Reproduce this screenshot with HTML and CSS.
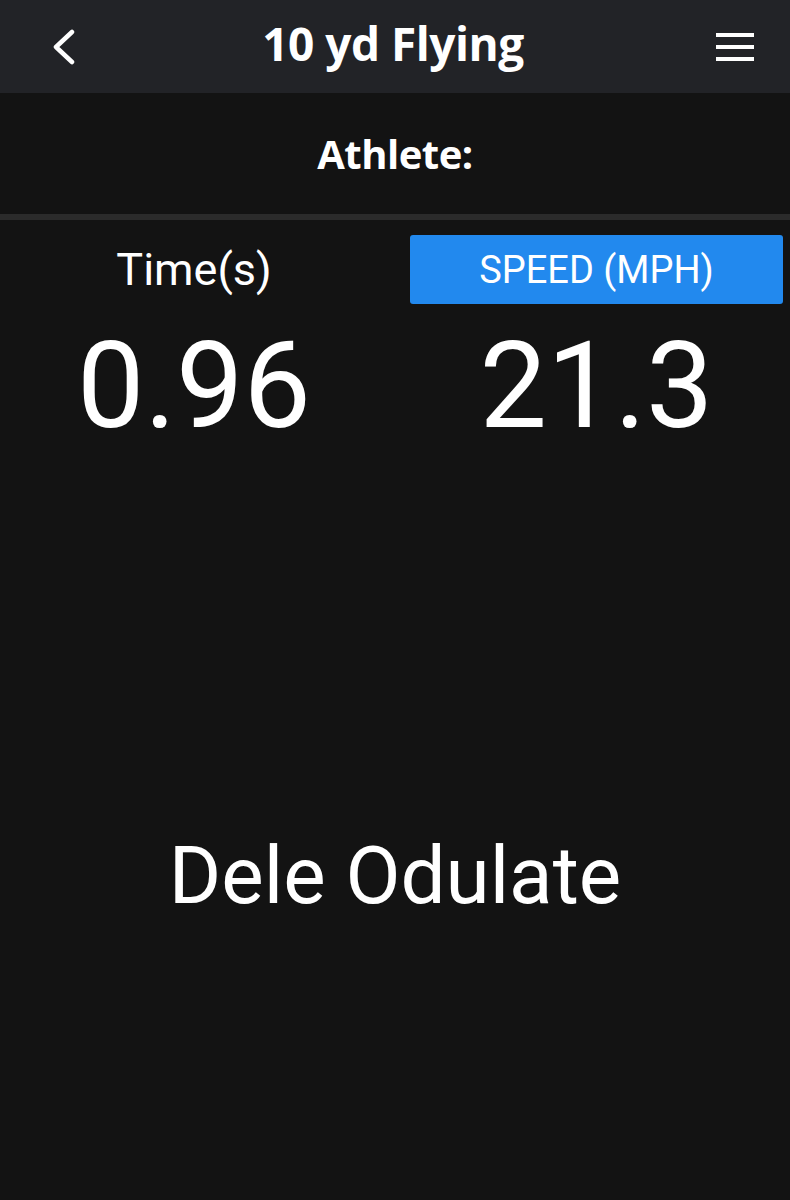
FILE: index.html
```html
<!DOCTYPE html>
<html lang="en">
<head>
    <meta charset="UTF-8">
    <meta name="viewport" content="width=device-width, initial-scale=1.0">
    <title>10 yd Flying</title>
    <link rel="stylesheet" href="styles.css">
</head>
<body>
    <div class="topbar">
        <a class="back-btn" href="#">
            <svg width="24" height="36" viewBox="0 0 24 36">
                <path d="M20 3 L4 18 L20 33" fill="none" stroke="#fff" stroke-width="4.5" stroke-linecap="round" stroke-linejoin="round"/>
            </svg>
        </a>
        <h1 class="title">10 yd Flying</h1>
        <a class="menu-btn" href="#">
            <svg width="38" height="30" viewBox="0 0 38 30">
                <rect x="0" y="1" width="38" height="4" fill="#fff"/>
                <rect x="0" y="13" width="38" height="4" fill="#fff"/>
                <rect x="0" y="25" width="38" height="4" fill="#fff"/>
            </svg>
        </a>
    </div>

    <div class="athlete">Athlete:</div>
    <div class="divider"></div>

    <div class="stats">
        <div class="stat">
            <div class="stat-label">Time(s)</div>
            <div class="stat-value">0.96</div>
        </div>
        <div class="stat">
            <div class="stat-label active">SPEED (MPH)</div>
            <div class="stat-value">21.3</div>
        </div>
    </div>

    <div class="athlete-name">Dele Odulate</div>
</body>
</html>
```

FILE: styles.css
```css
body, html {
    margin: 0;
    padding: 0;
    background-color: #131313;
    color: #fff;
    font-family: Roboto, "Liberation Sans", sans-serif;
}

.topbar {
    height: 93px;
    background-color: #222327;
    display: grid;
    grid-template-columns: 1fr auto 1fr;
    align-items: center;
    padding: 0 36px;
}

.back-btn,
.menu-btn {
    display: flex;
    align-items: center;
}

.back-btn {
    margin-left: 16px;
}

.menu-btn {
    justify-self: end;
}

.title {
    margin: 0 0 0 -4px;
    font-family: "Open Sans", sans-serif;
    font-weight: bold;
    font-size: 46px;
    letter-spacing: -0.5px;
    padding-bottom: 8px;
}

.athlete {
    height: 121px;
    display: flex;
    justify-content: center;
    align-items: center;
    font-family: "Open Sans", sans-serif;
    font-weight: bold;
    font-size: 40px;
    letter-spacing: -0.5px;
}

.divider {
    height: 6px;
    background-color: #2b2b2b;
}

.stats {
    display: grid;
    grid-template-columns: 388px 1fr;
    column-gap: 22px;
    padding: 15px 7px 0 0;
}

.stat {
    text-align: center;
}

.stat-label {
    height: 69px;
    display: flex;
    justify-content: center;
    align-items: center;
    font-size: 45px;
    border-radius: 3px;
}

.stat-label.active {
    background-color: #2289ee;
    font-size: 38px;
}

.stat-value {
    margin-top: 22px;
    font-size: 120px;
    line-height: 1;
}

.athlete-name {
    margin-top: 390px;
    text-align: center;
    font-size: 80px;
    line-height: 1;
}
```
